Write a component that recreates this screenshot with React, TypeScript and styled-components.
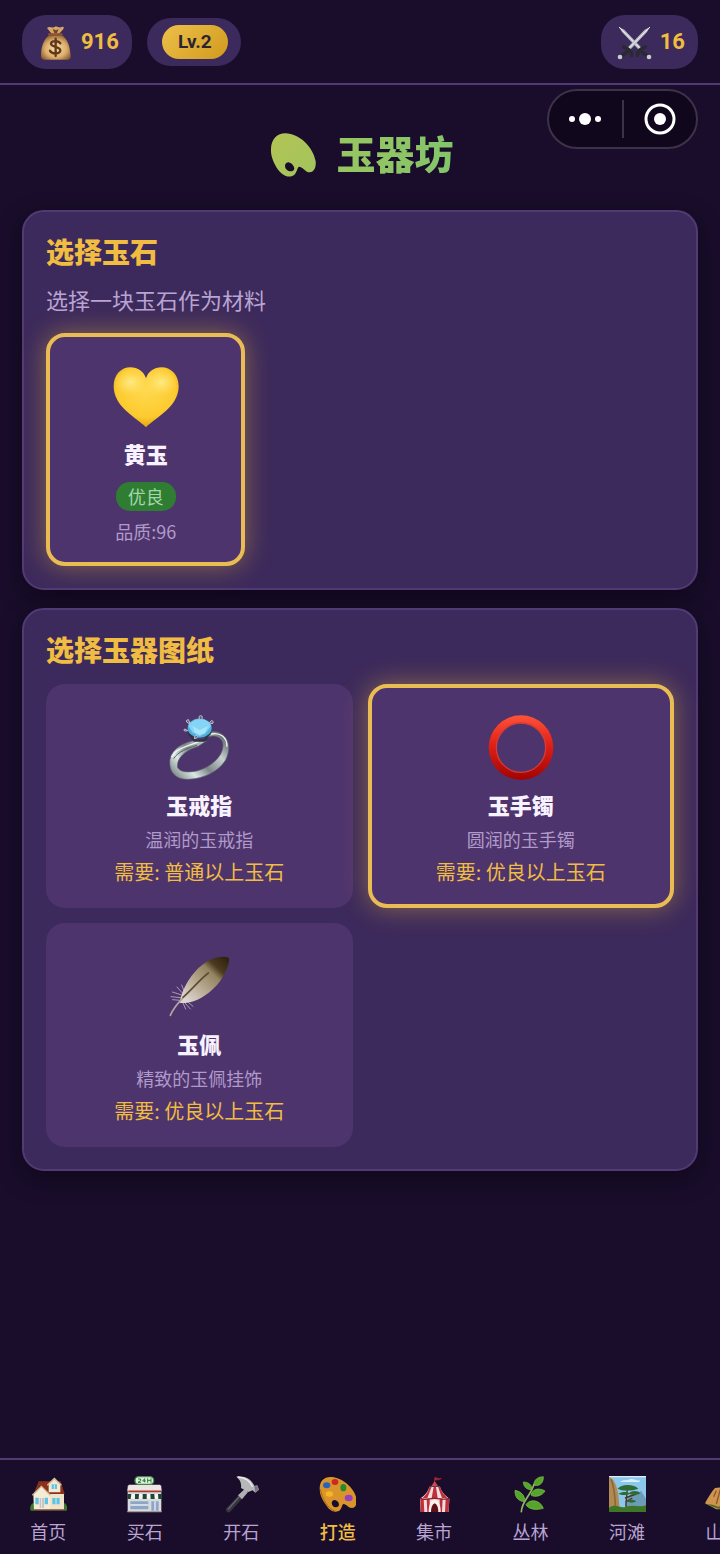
import React, { useState } from "react";
import styled, { createGlobalStyle } from "styled-components";

const color = {
  page: "#190d2b",
  panel: "#3d2a5c",
  tile: "#4e346d",
  line: "#523a75",
  gold: "#f0bd42",
  frame: "#e9bd54",
  muted: "#b9a4d2",
  dim: "#b09aca",
  bright: "#f8f2ff",
};

const GlobalStyle = createGlobalStyle`
  * { box-sizing: border-box; }
  body {
    margin: 0;
    background: ${color.page};
    color: ${color.bright};
    font-family: "Noto Sans CJK SC", sans-serif;
  }
  button { font: inherit; color: inherit; cursor: pointer; }
  h1, h2, p { margin: 0; }
`;

const Shell = styled.div`
  display: flex;
  flex-direction: column;
  min-height: 100vh;
`;

const TopBar = styled.header`
  display: flex;
  align-items: center;
  gap: 15px;
  padding: 15px 22px 14px;
  border-bottom: 2px solid ${color.line};
`;

const StatPill = styled.div<{ $compact?: boolean; $end?: boolean }>`
  display: flex;
  align-items: center;
  gap: 7px;
  height: ${(p) => (p.$compact ? 48 : 54)}px;
  padding: 0 13px 0 15px;
  margin-left: ${(p) => (p.$end ? "auto" : "0")};
  border-radius: 24px;
  background: ${color.panel};
`;

const StatValue = styled.span`
  font: 700 22px/30px Roboto, sans-serif;
  color: ${color.gold};
`;

const LevelBadge = styled.span`
  padding: 0 16px;
  border-radius: 17px;
  background: linear-gradient(135deg, #ecc04a, #d29a1e);
  font: 700 19px/34px Roboto, sans-serif;
  color: #2c2433;
`;

const Capsule = styled.div`
  position: absolute;
  top: 89px;
  right: 22px;
  display: flex;
  align-items: center;
  width: 151px;
  height: 60px;
  border: 2px solid #3c3249;
  border-radius: 30px;
  background: #10071c;
`;

const CapsuleButton = styled.button`
  flex: 1;
  display: flex;
  align-items: center;
  justify-content: center;
  height: 38px;
  padding: 0;
  border: 0;
  background: none;

  & + & { border-left: 2px solid #3c3249; }
`;

const Main = styled.main`
  flex: 1;
  display: flex;
  flex-direction: column;
  gap: 18px;
  padding: 42px 22px 24px;
`;

const PageTitle = styled.h1`
  display: flex;
  align-items: center;
  justify-content: center;
  gap: 20px;
  margin-bottom: 11px;
  padding-left: 4px;
  font-size: 39px;
  line-height: 54px;
  font-weight: 900;
`;

const TitleText = styled.span`
  margin-bottom: 4px;
  line-height: 50px;
  background: linear-gradient(90deg, #98c561, #83c56a);
  background-clip: text;
  -webkit-background-clip: text;
  color: transparent;
`;

const Panel = styled.section`
  padding: 20px 22px 22px;
  border: 2px solid ${color.line};
  border-radius: 22px;
  background: ${color.panel};
  box-shadow: 0 8px 24px rgba(0, 0, 0, 0.4);
`;

const PanelTitle = styled.h2`
  margin-bottom: 16px;
  font-size: 28px;
  line-height: 38px;
  font-weight: 900;
  color: ${color.gold};
`;

const PanelHint = styled.p`
  margin-bottom: 21px;
  font-size: 22px;
  line-height: 26px;
  color: ${color.muted};
`;

const TileGrid = styled.div<{ $columns: number }>`
  display: grid;
  grid-template-columns: repeat(${(p) => p.$columns}, 1fr);
  gap: 15px;
`;

const Tile = styled.button<{ $selected: boolean }>`
  display: flex;
  flex-direction: column;
  align-items: center;
  padding: 26px 12px 18px;
  border: 4px solid ${(p) => (p.$selected ? color.frame : "transparent")};
  border-radius: 19px;
  background: ${color.tile} border-box;
  box-shadow: ${(p) => (p.$selected ? "0 0 26px rgba(233, 180, 60, 0.45)" : "none")};
`;

const TileName = styled.span`
  margin-top: 7px;
  font-size: 22px;
  line-height: 30px;
  font-weight: 900;
`;

const Grade = styled.span`
  margin: 14px 0 7px;
  padding: 0 12px;
  border-radius: 14px;
  background: #2e7d32;
  font-size: 18px;
  line-height: 29px;
  color: #a5d6a7;
`;

const TileText = styled.span`
  font-size: 18px;
  line-height: 26px;
  color: ${color.dim};
`;

const RecipeText = styled(TileText)`
  margin: 7px 0 6px;
`;

const Requirement = styled.span`
  font-size: 20px;
  line-height: 28px;
  color: ${color.gold};
`;

const TabBar = styled.nav`
  position: sticky;
  bottom: 0;
  display: flex;
  height: 96px;
  overflow-x: auto;
  border-top: 2px solid ${color.line};
  background: ${color.page};
  scrollbar-width: none;
`;

const Tab = styled.a<{ $active: boolean }>`
  flex: 0 0 13.4%;
  display: flex;
  flex-direction: column;
  align-items: center;
  gap: 5px;
  padding-top: 16px;
  font-size: 18px;
  line-height: 26px;
  font-weight: ${(p) => (p.$active ? 500 : 400)};
  text-decoration: none;
  color: ${(p) => (p.$active ? color.gold : color.muted)};
`;

const MoneyBag = () => (
  <svg width="37" height="37" viewBox="0 0 111 111" aria-hidden="true">
    <defs>
      <radialGradient id="bag" cx="50%" cy="55%" r="60%">
        <stop offset="0" stopColor="#f8dfa0" />
        <stop offset="0.6" stopColor="#dcae6c" />
        <stop offset="1" stopColor="#8a5a30" />
      </radialGradient>
    </defs>
    <path d="M36 34C18 48 12 72 12 96c0 9 6 11 14 11h64c8 0 12-3 11-11-2-26-8-50-26-62Z" fill="url(#bag)" />
    <path d="M30 12c8-7 15 2 22-3 7-4 14 4 22 0 8-3 8 4 2 10L66 29H44Z" fill="#d8a768" />
    <path d="M47 15l5 12h8l5-12-8 4Z" fill="#704725" />
    <path d="M36 31h38" stroke="#8d542a" strokeWidth="6" strokeLinecap="round" />
    <path d="M70 58c-4-8-27-10-28 1s28 8 28 20-26 12-31 1M56 44v52" fill="none" stroke="#61371e" strokeWidth="7" strokeLinecap="round" />
  </svg>
);

const Swords = () => (
  <svg width="37" height="37" viewBox="0 0 111 111" aria-hidden="true">
    {["", "translate(111 0) scale(-1 1)"].map((t) => (
      <g key={t} transform={t}>
        <path d="M9 9l16 8 56 59-7 7L18 24Z" fill="#b9bcc4" />
        <path d="M9 9l70 71" stroke="#f0f1f3" strokeWidth="3" />
        <path d="M64 94c1-12 8-20 24-25M76 82l18 14" stroke="#292a31" strokeWidth="11" fill="none" strokeLinecap="round" />
        <circle cx="99" cy="99" r="7" fill="#c9cad0" />
      </g>
    ))}
  </svg>
);

const PaletteMark = () => (
  <svg width="46" height="46" viewBox="0 0 138 138" aria-hidden="true">
    <defs>
      <linearGradient id="mark" x1="0" y1="0" x2="1" y2="1">
        <stop offset="0" stopColor="#b4c455" />
        <stop offset="1" stopColor="#a1c45c" />
      </linearGradient>
    </defs>
    <path
      fillRule="evenodd"
      fill="url(#mark)"
      d="M3 54C4 24 22 7 46 7c42 0 84 42 91 84 2 20-6 33-18 33-14 0-20-17-32-17-6 2-7 24-20 28-16 6-33-4-47-25C10 92 2 76 3 54ZM49 96c-7 6-4 19 5 23 9 4 18 1 19-6 0-10-15-25-24-17Z"
    />
  </svg>
);

const Heart = () => (
  <svg width="68" height="68" viewBox="0 0 204 204" aria-hidden="true">
    <defs>
      <radialGradient id="heart" cx="50%" cy="38%" r="65%">
        <stop offset="0" stopColor="#ffd950" />
        <stop offset="0.7" stopColor="#fcca2e" />
        <stop offset="1" stopColor="#dc9c0c" />
      </radialGradient>
      <radialGradient id="shine">
        <stop offset="0" stopColor="#ffea85" />
        <stop offset="1" stopColor="#ffe066" stopOpacity="0" />
      </radialGradient>
    </defs>
    <path d="M102 193C72 163 5 132 5 70 5 35 28 13 55 13c23 0 40 12 47 33 7-21 24-33 47-33 27 0 51 22 51 57 0 62-68 93-98 123Z" fill="url(#heart)" />
    <ellipse cx="56" cy="58" rx="50" ry="42" fill="url(#shine)" />
    <ellipse cx="148" cy="58" rx="50" ry="42" fill="url(#shine)" />
  </svg>
);

const Ring = () => (
  <svg width="68" height="68" viewBox="0 0 204 204" aria-hidden="true">
    <defs>
      <linearGradient id="band" x1="0" y1="1" x2="1" y2="0.2">
        <stop offset="0" stopColor="#5d6668" />
        <stop offset="0.3" stopColor="#dce6e4" />
        <stop offset="0.5" stopColor="#7d8788" />
        <stop offset="0.75" stopColor="#c6d0cf" />
        <stop offset="1" stopColor="#626b6e" />
      </linearGradient>
    </defs>
    <path
      fillRule="evenodd"
      fill="url(#band)"
      stroke="#586066"
      strokeWidth="2"
      d="M94 78C55 86 22 102 15 136c-5 38 17 62 57 60 46-3 88-23 110-58 18-38 10-72-24-84-12-3-24-2-30 5l-8 16c18-15 46-10 53 10 8 36-32 74-78 86-30 6-50 2-57-10-5-30 25-52 62-64l24-16Z"
    />
    <path d="M20 130c10-24 40-32 80-46M138 60c28-6 48 10 48 38" fill="none" stroke="#eef4f3" strokeWidth="4" />
    <path d="M26 134c14-22 40-30 70-40" fill="none" stroke="#5b6568" strokeWidth="3" />
    <path d="M70 56l18 24h30l20-28" fill="none" stroke="#2b3542" strokeWidth="7" />
    <ellipse cx="104" cy="42" rx="36" ry="29" fill="#4fb0df" />
    <path d="M70 36c6-14 22-21 36-20 16 0 28 8 32 20l-16 22-18 9-22-12Z" fill="#84d5f5" />
    <path d="M82 36l22 12 26-12-12 22-14 4-14-6Z" fill="#a8e4fa" />
    <g fill="#5d5f7a" stroke="#bcc0cf" strokeWidth="3">
      <path d="M74 30l-9-6a4 4 0 1 1 7-5ZM104 17l-2-7a5 5 0 1 1 10 0l-2 7ZM133 27l6-7a4 4 0 1 1 2 9ZM68 50l-8 1a3 3 0 1 1 0-6ZM88 74l2-8a4 4 0 1 1 7 5Z" />
    </g>
  </svg>
);

const Bangle = () => (
  <svg width="68" height="68" viewBox="0 0 204 204" aria-hidden="true">
    <defs>
      <linearGradient id="bangle" x1="0" y1="0" x2="0" y2="1">
        <stop offset="0" stopColor="#ff5238" />
        <stop offset="0.45" stopColor="#e02116" />
        <stop offset="1" stopColor="#a00303" />
      </linearGradient>
    </defs>
    <path fillRule="evenodd" fill="url(#bangle)" d="M102 4a97 97 0 1 0 0 194 97 97 0 1 0 0-194Zm0 24a73 73 0 1 1 0 146 73 73 0 1 1 0-146Z" />
    <circle cx="102" cy="101" r="74" fill="none" stroke="#d23c38" strokeWidth="4" />
  </svg>
);

const Feather = () => (
  <svg width="68" height="68" viewBox="0 0 204 204" aria-hidden="true">
    <defs>
      <linearGradient id="vane" x1="0.1" y1="0.9" x2="0.95" y2="0.05">
        <stop offset="0" stopColor="#ddd5cf" />
        <stop offset="0.3" stopColor="#bcae98" />
        <stop offset="0.65" stopColor="#93835f" />
        <stop offset="0.78" stopColor="#4b3b20" />
        <stop offset="1" stopColor="#32230f" />
      </linearGradient>
    </defs>
    <path d="M44 150C50 106 84 46 136 20c22-10 44-10 56-6 3 14-10 52-36 82-32 34-62 50-94 54Z" fill="url(#vane)" />
    <path d="M54 122l-18-20M50 126l-28-9M47 134l-29-3M45 142l-22-2M60 120l-10-24M60 150l16 18M54 150l8 18M70 148l14 12" stroke="#d8ced2" strokeWidth="2" strokeLinecap="round" />
    <path d="M16 187c8-18 20-34 36-50" fill="none" stroke="#b7a69d" strokeWidth="5" strokeLinecap="round" />
    <path d="M54 133C82 108 108 76 130 60" fill="none" stroke="#5e4c34" strokeWidth="5" strokeLinecap="round" />
  </svg>
);

const TabIcon = ({ children }: { children: React.ReactNode }) => (
  <svg width="37" height="37" viewBox="0 0 111 111" aria-hidden="true">
    {children}
  </svg>
);

const House = () => (
  <TabIcon>
    <path d="M8 82h96c8 4 10 22 4 22H4c-6 0-4-18 4-22Z" fill="#3f7a2b" />
    <path d="M12 50h90v52H12Z" fill="#efe4c8" />
    <path d="M26 16h66l12 38H44L30 30 10 56Z" fill="#8c2f1c" />
    <path d="M56 26l17-17 18 17v23H56Z" fill="#f2e9d2" />
    <path d="M52 28L73 7l21 21" fill="none" stroke="#d8c9a4" strokeWidth="4" />
    <path d="M10 56l24-25 26 25v46H12Z" fill="#f4ecd8" />
    <path d="M7 58l27-27 27 27" fill="none" stroke="#cdbb96" strokeWidth="4" />
    <path d="M65 25h16v14H65ZM67 66h22v19H67ZM16 65h10v20H16ZM44 65h10v20H44Z" fill="#5fc3e4" />
    <path d="M29 66h13v30H29Z" fill="#c9c1bb" />
    <path d="M12 102h92" stroke="#743c2a" strokeWidth="4" />
    <path d="M73 25v14M78 66v19M35 66v30" stroke="#fff" strokeWidth="2" />
  </TabIcon>
);

const Store = () => (
  <TabIcon>
    <path d="M5 29h101v79H5Z" fill="#d8dadd" />
    <path d="M8 26h95l4 18H4Z" fill="#efe4e2" />
    <path d="M7 46h98" stroke="#ab3d36" strokeWidth="5" />
    <path d="M6 54h99v14H6Z" fill="#f7f7f2" />
    <path d="M4 54h12l-2 15H4ZM27 54h12l-1 15H27ZM50 54h12v15H50ZM73 54h12l1 15H74ZM96 54h11v15H97Z" fill="#1f4637" />
    <path d="M13 76h54v24H13ZM76 76h22v28H76Z" fill="#8ea6c6" />
    <path d="M13 87h54M87 76v28" stroke="#e9eef4" strokeWidth="4" />
    <path d="M4 107h103" stroke="#a59a97" strokeWidth="4" />
    <rect x="27" y="2" width="56" height="23" rx="11" fill="#e1f1dd" stroke="#3f8a4b" strokeWidth="4" />
    <path d="M36 9h8v5l-8 5h9M56 19V8l-6 7h9M65 7v13M75 7v13M65 13h10" fill="none" stroke="#2e7b3d" strokeWidth="3" />
  </TabIcon>
);

const Hammer = () => (
  <TabIcon>
    <path d="M54 51l10 10-43 47c-5 4-14-2-12-10Z" fill="#36343c" />
    <path d="M48 63L16 99" stroke="#66636d" strokeWidth="4" strokeLinecap="round" />
    <path d="M66 38l9 10-18 22-12-12Z" fill="#aeb0b4" />
    <path d="M40 2c26-3 43 5 55 28l8-2 5 13-11 9-8-7-13 5-22-12c2-14-3-26-14-34Z" fill="#b7b7b9" />
    <path d="M44 3c22 1 36 10 45 29" fill="none" stroke="#ededee" strokeWidth="4" />
    <path d="M94 31l8-3 6 12-11 10" fill="#77777e" />
  </TabIcon>
);

const Palette = () => (
  <TabIcon>
    <path fillRule="evenodd" fill="#d9952c" d="M2 38C2 15 15 3 34 3c34-1 75 34 79 68 1 16-5 25-14 25-12 0-17-13-26-12-5 2-4 18-16 22-14 5-29-6-38-22C9 70 2 55 2 38ZM41 74c-7 7 0 20 9 20 13 0 12-14 4-19-4-3-10-4-13-1Z" />
    <path d="M4 40C10 68 26 100 50 106" fill="none" stroke="#a86615" strokeWidth="3" />
    <ellipse cx="23" cy="28" rx="11" ry="9" fill="#2862be" />
    <ellipse cx="48" cy="18" rx="10" ry="9" fill="#cd2923" />
    <ellipse cx="73" cy="35" rx="9" ry="11" fill="#258a2b" />
    <ellipse cx="31" cy="54" rx="11" ry="8" fill="#f5b727" />
    <ellipse cx="89" cy="66" rx="12" ry="10" fill="#9b3fc2" />
  </TabIcon>
);

const Tent = () => (
  <TabIcon>
    <path d="M56 18V5c8-1 12 6 20 2-5 5-10 4-18 5" fill="#a52b34" stroke="#a52b34" strokeWidth="2" />
    <path d="M46 30l10-15 10 15Z" fill="#cf4650" />
    <path d="M40 32h32c4 16 16 26 28 36l-2 40H14l-2-40c14-10 24-20 28-36Z" fill="#f0dede" />
    <path d="M40 32h7L34 66H20c12-12 18-22 20-34ZM53 32h7l5 34H47ZM66 32h6c4 15 12 24 22 34H78ZM13 68h10l2 40H14ZM32 68h9v40h-7ZM71 68h9l-2 40h-7ZM89 68h11l-2 40H87Z" fill="#c02f3c" />
    <path d="M12 67c18 7 26 0 44 0s30 6 44 0" fill="none" stroke="#8c1e2b" strokeWidth="4" />
    <path d="M56 70c-13 5-18 20-18 38h36c0-20-5-33-18-38Z" fill="#faf0ec" />
    <path d="M56 82c-8 4-11 14-11 26h22c0-13-3-22-11-26Z" fill="#611019" />
  </TabIcon>
);

const Herb = () => (
  <TabIcon>
    <path d="M28 107C29 76 56 60 66 25" fill="none" stroke="#8fb56a" strokeWidth="5" strokeLinecap="round" />
    <g fill="#55a52c" stroke="#83c44a" strokeWidth="2">
      <path d="M66 28C64 12 78 2 94 2c1 16-9 30-28 26Z" />
      <path d="M60 41C42 42 34 30 34 18c15 0 27 9 26 23Z" />
      <path d="M57 57c4-20 26-22 42-12-9 16-32 20-42 12Z" />
      <path d="M38 77C16 76 8 60 9 43c18 3 31 16 29 34Z" />
      <path d="M42 86c10-18 42-16 52 11-20 6-44 4-52-11Z" />
    </g>
  </TabIcon>
);

const Riverbank = () => (
  <TabIcon>
    <path d="M0 0h111v108H0Z" fill="#8cc7ec" />
    <path d="M34 18c10-8 20-3 28-8 12-4 18 5 30 3v5H34ZM0 0h111v4H0Z" fill="#d9effa" />
    <path d="M48 76l22-30 12 12 14-14 15 25v39H48Z" fill="#6d9cb8" />
    <path d="M0 2c14 6 24 26 28 54 2 24 4 32 4 52H0Z" fill="#b08a50" />
    <path d="M6 10c10 20 12 48 14 90" fill="none" stroke="#89693b" strokeWidth="5" />
    <path d="M52 98c-4-24 4-38 2-60M48 66l34-12M50 78l20-12" fill="none" stroke="#4a3a23" strokeWidth="4" />
    <path d="M26 38c10-14 48-16 62 0-16 7-50 8-62 0ZM28 53c14-8 28-6 36 0-12 6-26 5-36 0ZM60 52c10-10 28-8 34 0-10 6-24 6-34 0ZM54 76c10-8 22-5 28 0-8 6-22 5-28 0Z" fill="#2f6b35" />
    <path d="M0 96c20-16 34 4 52-4 20-8 40 4 59-4v20H0Z" fill="#3f7626" />
  </TabIcon>
);

const Mountain = () => (
  <TabIcon>
    <path d="M0 82c10-18 20-36 30-46l20-2 16-16 18 24 27 44-30 14H34Z" fill="#cf9550" />
    <path d="M34 44L26 62M46 40L34 84M64 22L54 94M78 42l4 50" stroke="#8a5826" strokeWidth="4" />
    <path d="M0 84c12 2 24 0 38 8 20-4 50 2 71-10l-8 16H40Z" fill="#4f6c22" />
  </TabIcon>
);

const recipes = [
  { name: "玉戒指", text: "温润的玉戒指", grade: "普通", Icon: Ring },
  { name: "玉手镯", text: "圆润的玉手镯", grade: "优良", Icon: Bangle },
  { name: "玉佩", text: "精致的玉佩挂饰", grade: "优良", Icon: Feather },
];

const tabs = [
  { id: "home", label: "首页", Icon: House },
  { id: "buy", label: "买石", Icon: Store },
  { id: "open", label: "开石", Icon: Hammer },
  { id: "craft", label: "打造", Icon: Palette },
  { id: "market", label: "集市", Icon: Tent },
  { id: "jungle", label: "丛林", Icon: Herb },
  { id: "river", label: "河滩", Icon: Riverbank },
  { id: "mountain", label: "山脉", Icon: Mountain },
];

export default function App() {
  const [stoneChosen, setStoneChosen] = useState(true);
  const [recipe, setRecipe] = useState("玉手镯");

  return (
    <Shell>
      <GlobalStyle />
      <TopBar>
        <StatPill>
          <MoneyBag />
          <StatValue>916</StatValue>
        </StatPill>
        <StatPill $compact>
          <LevelBadge>Lv.2</LevelBadge>
        </StatPill>
        <StatPill $end>
          <Swords />
          <StatValue>16</StatValue>
        </StatPill>
      </TopBar>

      <Capsule>
        <CapsuleButton type="button" aria-label="更多">
          <svg width="32" height="12" viewBox="0 0 32 12" fill="#fff" aria-hidden="true">
            <circle cx="3" cy="6" r="3" />
            <circle cx="16" cy="6" r="6" />
            <circle cx="29" cy="6" r="3" />
          </svg>
        </CapsuleButton>
        <CapsuleButton type="button" aria-label="关闭">
          <svg width="32" height="32" viewBox="0 0 32 32" aria-hidden="true">
            <circle cx="16" cy="16" r="14" fill="none" stroke="#fff" strokeWidth="3" />
            <circle cx="16" cy="16" r="6" fill="#fff" />
          </svg>
        </CapsuleButton>
      </Capsule>

      <Main>
        <PageTitle>
          <PaletteMark />
          <TitleText>玉器坊</TitleText>
        </PageTitle>

        <Panel>
          <PanelTitle>选择玉石</PanelTitle>
          <PanelHint>选择一块玉石作为材料</PanelHint>
          <TileGrid $columns={3}>
            <Tile
              type="button"
              $selected={stoneChosen}
              aria-pressed={stoneChosen}
              onClick={() => setStoneChosen(!stoneChosen)}
            >
              <Heart />
              <TileName>黄玉</TileName>
              <Grade>优良</Grade>
              <TileText>品质:96</TileText>
            </Tile>
          </TileGrid>
        </Panel>

        <Panel>
          <PanelTitle>选择玉器图纸</PanelTitle>
          <TileGrid $columns={2}>
            {recipes.map(({ name, text, grade, Icon }) => (
              <Tile
                key={name}
                type="button"
                $selected={recipe === name}
                aria-pressed={recipe === name}
                onClick={() => setRecipe(name)}
              >
                <Icon />
                <TileName>{name}</TileName>
                <RecipeText>{text}</RecipeText>
                <Requirement>需要: {grade}以上玉石</Requirement>
              </Tile>
            ))}
          </TileGrid>
        </Panel>
      </Main>

      <TabBar>
        {tabs.map(({ id, label, Icon }) => (
          <Tab key={id} href={`#${id}`} $active={id === "craft"}>
            <Icon />
            {label}
          </Tab>
        ))}
      </TabBar>
    </Shell>
  );
}
